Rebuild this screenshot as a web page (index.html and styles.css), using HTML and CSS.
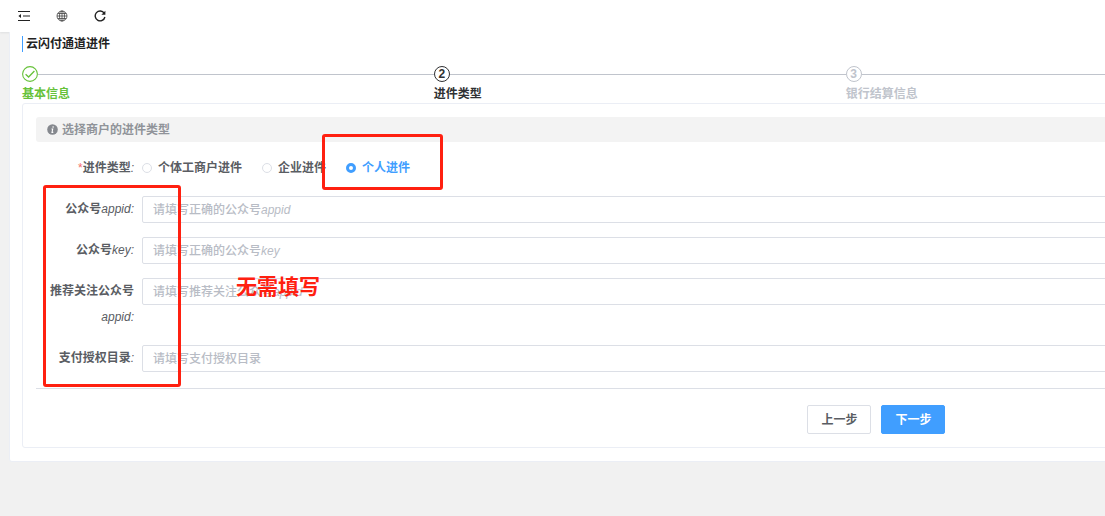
FILE: index.html
```html
<!DOCTYPE html>
<html lang="zh-CN">
<head>
<meta charset="utf-8">
<title>云闪付通道进件</title>
<link rel="stylesheet" href="styles.css">
</head>
<body>
<header class="topbar">
  <button class="tool" type="button" aria-label="收起菜单">
    <svg width="12" height="12" viewBox="0 0 12 12" fill="none" stroke="#222" stroke-width="1.2"><path d="M0 1.5h12M5 6h7M0 10.5h12"/><path d="M3 4v4L.4 6z" fill="#222" stroke="none"/></svg>
  </button>
  <button class="tool" type="button" aria-label="语言">
    <svg width="12" height="12" viewBox="0 0 12 12" fill="none" stroke="#444" stroke-width=".8"><circle cx="6" cy="6" r="5"/><ellipse cx="6" cy="6" rx="2.5" ry="5"/><path d="M6 1v10M1 6h10M1.8 3.5h8.4M1.8 8.5h8.4"/></svg>
  </button>
  <button class="tool" type="button" aria-label="刷新">
    <svg width="12" height="12" viewBox="0 0 12 12" fill="none" stroke="#222" stroke-width="1.4"><path d="M10.2 3.2A4.9 4.9 0 1 0 10.9 7"/><path d="M11.4.8v4H7.4z" fill="#222" stroke="none"/></svg>
  </button>
</header>
<main class="card">
  <h1 class="title">云闪付通道进件</h1>
  <ol class="steps">
    <li class="step done">
      <span class="mark"><svg width="16" height="16" viewBox="0 0 16 16" fill="none" stroke="currentColor" stroke-width="1.3"><circle cx="8" cy="8" r="7.4" stroke-width="1.1"/><path d="M3.6 8.2l3 2.8 5.8-6"/></svg></span>
      <span class="step-name">基本信息</span>
    </li>
    <li class="step current"><span class="mark"><span class="number">2</span></span><span class="step-name">进件类型</span></li>
    <li class="step"><span class="mark"><span class="number">3</span></span><span class="step-name">银行结算信息</span></li>
    <li class="step"></li>
  </ol>
  <form class="panel">
    <p class="notice">
      <svg width="11" height="11" viewBox="0 0 11 11"><circle cx="5.5" cy="5.5" r="5.3" fill="#85888e"/><path d="M6.1 2.2v1.5M4.5 5h1.2L5 8.4h1.3" fill="none" stroke="#fff" stroke-width="1.1"/></svg>
      选择商户的进件类型
    </p>
    <div class="fields">
      <div class="row" role="radiogroup" aria-labelledby="kind">
        <span class="label" id="kind"><span class="star">*</span>进件类型<i>:</i></span>
        <div class="options">
          <label class="option"><input type="radio" name="kind">个体工商户进件</label>
          <label class="option"><input type="radio" name="kind">企业进件</label>
          <label class="option"><input type="radio" name="kind" checked>个人进件</label>
        </div>
      </div>
      <div class="row"><label class="label" for="appid">公众号<i>appid:</i></label><input class="text" id="appid" type="text" placeholder="请填写正确的公众号appid"></div>
      <div class="row"><label class="label" for="key">公众号<i>key:</i></label><input class="text" id="key" type="text" placeholder="请填写正确的公众号key"></div>
      <div class="row"><label class="label" for="follow">推荐关注公众号<i>appid:</i></label><input class="text" id="follow" type="text" placeholder="请填写推荐关注公众号appid"></div>
      <div class="row"><label class="label" for="path">支付授权目录<i>:</i></label><input class="text" id="path" type="text" placeholder="请填写支付授权目录"></div>
    </div>
    <div class="actions">
      <button class="btn" type="button">上一步</button>
      <button class="btn primary" type="button">下一步</button>
    </div>
  </form>
  <div class="outline outline-kind"></div>
  <div class="outline outline-labels"></div>
  <strong class="remark">无需填写</strong>
</main>
</body>
</html>
```
FILE: styles.css
```css
* { box-sizing: border-box; }
body {
  margin: 0;
  min-height: 100vh;
  overflow: hidden;
  background: #f1f1f1;
  color: #5a5d63;
  font: 500 12px/16px "Liberation Sans", "Noto Sans CJK SC", sans-serif;
  font-synthesis: none;
}
button, input { font: inherit; font-synthesis: none; }
.topbar {
  position: relative;
  display: flex;
  align-items: center;
  gap: 14px;
  height: 32px;
  padding-left: 12px;
  background: #fff;
  box-shadow: 0 1px 2px rgba(0, 21, 41, .08);
}
.tool {
  display: flex;
  align-items: center;
  justify-content: center;
  width: 24px;
  height: 24px;
  padding: 0;
  border: 0;
  background: none;
}
/* The card is wider than the window and runs past its right edge. */
.card {
  position: relative;
  width: 157vw;
  margin-left: 9px;
  padding: 4px 12px 13px;
  border: 1px solid #ebeef5;
  border-top: 0;
  border-radius: 0 0 3px 3px;
  background: #fff;
}
.title {
  margin: 0 0 14px;
  padding-left: 3px;
  border-left: 1px solid #409eff;
  color: #222;
  font-size: 12px;
  font-weight: 700;
  line-height: 16px;
}
.steps {
  display: grid;
  grid-template-columns: 24.1% 24.1% 24.1% 1fr;
  margin: 0;
  padding: 0;
  list-style: none;
}
.step { color: #c0c4cc; }
.mark { display: flex; align-items: center; height: 16px; }
.mark::after { content: ""; flex: 1; height: 1px; background: #c0c4cc; }
.number {
  width: 16px;
  height: 16px;
  border: 1px solid;
  border-radius: 50%;
  font-weight: 700;
  line-height: 14px;
  text-align: center;
}
.step-name { display: block; padding-top: 3px; line-height: 18px; font-weight: 700; }
.done { color: #67c23a; }
.current { color: #303133; }
.panel {
  padding: 13px;
  border: 1px solid #ebeef5;
  border-radius: 3px;
}
.notice {
  display: flex;
  align-items: center;
  gap: 4px;
  height: 25px;
  margin: 0;
  padding-left: 11px;
  border-radius: 3px;
  background: #f3f3f3;
  color: #909399;
  font-weight: 700;
}
.fields {
  display: flex;
  flex-direction: column;
  gap: 15px;
  padding: 13px 0 17px;
  border-bottom: 1px solid #dcdfe6;
}
.row { display: flex; align-items: flex-start; }
.label {
  width: 106px;
  padding: 0 8px 0 10px;
  font-weight: 700;
  line-height: 26px;
  text-align: right;
  overflow-wrap: break-word;
}
.label i { font-weight: 400; }
.star { color: #f56c6c; font-weight: 400; }
.options { display: flex; gap: 20px; }
.option { display: flex; align-items: center; gap: 6px; line-height: 26px; font-weight: 700; }
.option input {
  appearance: none;
  width: 10px;
  height: 10px;
  margin: 0;
  border: 1px solid #dcdfe6;
  border-radius: 50%;
  background: #fff;
}
.option input:checked { border: 3px solid #409eff; }
.option:has(input:checked) { color: #409eff; }
.text {
  flex: 1;
  height: 27px;
  margin-bottom: -1px;
  padding: 0 10px;
  border: 1px solid #dcdfe6;
  border-radius: 2px;
  background: #fff;
  color: #5a5d63;
  font-style: italic;
}
.text::placeholder { color: #b8bcc5; }
.actions { display: flex; justify-content: center; gap: 10px; padding-top: 16px; }
.btn {
  width: 64px;
  height: 29px;
  padding: 0;
  border: 1px solid #dcdfe6;
  border-radius: 2px;
  background: #fff;
  color: #5a5d63;
  font-weight: 700;
}
.primary { border-color: #409eff; background: #409eff; color: #fff; }
.outline { position: absolute; border: 3px solid #ff2010; border-radius: 3px; pointer-events: none; }
.outline-kind { left: 312px; top: 102px; width: 121px; height: 56px; }
.outline-labels { left: 33px; top: 153px; width: 138px; height: 202px; }
.remark { position: absolute; left: 226px; top: 242px; color: #ff2010; font-size: 21px; line-height: 26px; }
```
